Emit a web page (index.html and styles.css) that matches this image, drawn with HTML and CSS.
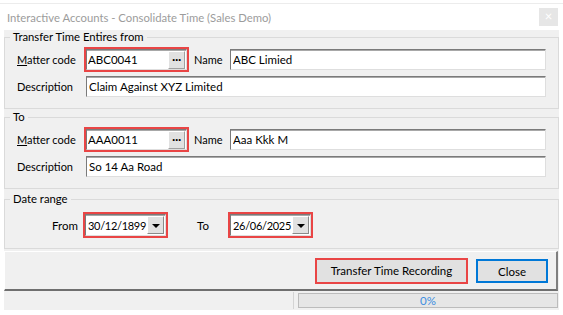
FILE: index.html
```html
<!DOCTYPE html>
<html lang="en">
<head>
  <meta charset="UTF-8">
  <title>Interactive Accounts - Consolidate Time (Sales Demo)</title>
  <link rel="stylesheet" href="styles.css">
</head>
<body>
  <div class="window">
    <div class="titlebar">
      <span class="title">Interactive Accounts - Consolidate Time (Sales Demo)</span>
      <span class="close">&#215;</span>
    </div>

    <div class="client">
      <!-- source matter -->
      <fieldset class="group">
        <legend>Transfer Time Entires from</legend>
        <div class="row row-top">
          <label class="lbl"><u>M</u>atter code</label>
          <div class="hl">
            <div class="lookup">
              <input type="text" value="ABC0041">
              <button class="dots">&middot;&middot;&middot;</button>
            </div>
          </div>
          <label class="lbl-name">Name</label>
          <input class="tb tb-name" type="text" value="ABC Limied">
        </div>
        <div class="row row-desc">
          <label class="lbl">Description</label>
          <input class="tb tb-desc" type="text" value="Claim Against XYZ Limited">
        </div>
      </fieldset>

      <!-- target matter -->
      <fieldset class="group group-to">
        <legend>To</legend>
        <div class="row row-top">
          <label class="lbl"><u>M</u>atter code</label>
          <div class="hl">
            <div class="lookup">
              <input type="text" value="AAA0011">
              <button class="dots">&middot;&middot;&middot;</button>
            </div>
          </div>
          <label class="lbl-name">Name</label>
          <input class="tb tb-name" type="text" value="Aaa Kkk M">
        </div>
        <div class="row row-desc">
          <label class="lbl">Description</label>
          <input class="tb tb-desc" type="text" value="So 14 Aa Road">
        </div>
      </fieldset>

      <!-- dates -->
      <fieldset class="group group-dates">
        <legend>Date range</legend>
        <div class="row row-date">
          <label class="lbl-date">From</label>
          <div class="hl">
            <div class="date">
              <span class="date-val">30/12/1899</span>
              <button class="drop"><span class="arrow"></span></button>
            </div>
          </div>
          <label class="lbl-date lbl-to">To</label>
          <div class="hl">
            <div class="date">
              <span class="date-val">26/06/2025</span>
              <button class="drop"><span class="arrow"></span></button>
            </div>
          </div>
        </div>
      </fieldset>

      <div class="actions">
        <button class="btn btn-transfer">Transfer Time Recording</button>
        <button class="btn btn-close">Close</button>
      </div>

      <div class="status">
        <span class="sep"></span>
        <div class="progress">0%</div>
      </div>
    </div>
  </div>
</body>
</html>
```

FILE: styles.css
```css
body { margin:0; padding-top:3px; background:#fff; color:#000; font-family:Lato, "Liberation Sans", sans-serif; font-size:11.5px; }
.window { width:563px; border-top:1px solid #ececec; }

/* title bar */
.titlebar { height:26px; display:flex; align-items:center; justify-content:space-between; padding:0 5px 0 7px; }
.title { color:#9c9c9c; font-size:11.3px; white-space:nowrap; }
.close { width:19px; height:18px; background:#e6e6e6; color:#fff; font-size:13px; line-height:17px; text-align:center; }

.client { margin:0 4px; height:280px; background:#f0f0f0; display:flex; flex-direction:column; }

/* group boxes */
.group { margin:0; border:1px solid #dadada; padding:3px 12px 11px 12px; min-width:0; }
.group legend { margin-left:-7px; padding:0 3px; line-height:14px; font-size:11.3px; }
.group-to { margin-top:1px; }
.group-dates { margin-top:3px; padding-top:6px; padding-bottom:10px; }

.row { display:flex; align-items:center; white-space:nowrap; }
.row-top { height:25px; }
.row-desc { height:21px; margin-top:4px; }
.row-date { height:26px; }

.lbl { width:67px; flex:none; font-size:11px; }
.lbl-name { width:36px; margin-left:5px; flex:none; font-size:11px; }
.lbl-date { width:31px; margin-left:35px; flex:none; }
.lbl-to { margin-left:29px; }

/* text boxes */
input { font:inherit; color:#000; }
.tb { box-sizing:border-box; height:21px; padding:0 2px; background:#fff; border:1px solid; border-color:#7a7a7a #dedede #dedede #7a7a7a; box-shadow:inset 0 1px 0 #a8a8a8; outline:none; }
.tb-name { width:316px; }
.tb-desc { width:460px; margin-left:2px; }

/* red highlight round a control */
.hl { border:2px solid #e94545; flex:none; }

.lookup { box-sizing:border-box; width:101px; height:21px; display:flex; align-items:center; background:#fff; border:1px solid; border-color:#7a7a7a #dedede #dedede #7a7a7a; box-shadow:inset 0 1px 0 #a8a8a8; }
.lookup input { flex:1; min-width:0; border:none; padding:0 1px; background:transparent; outline:none; height:18px; }
.dots { width:17px; height:18px; margin-right:1px; padding:0; background:#e1e1e1; border:1px solid; border-color:#fff #a0a0a0 #a0a0a0 #fff; font:bold 12px/14px "Liberation Sans", sans-serif; letter-spacing:-1px; color:#000; }

.date { box-sizing:border-box; width:81px; height:22px; display:flex; align-items:center; background:#fff; border:1px solid; border-color:#7a7a7a #dedede #dedede #7a7a7a; box-shadow:inset 0 1px 0 #a8a8a8; }
.date-val { flex:1; padding-left:2px; font-size:11px; letter-spacing:-0.3px; }
.drop { width:17px; height:18px; margin-right:1px; padding:0; background:#e1e1e1; border:1px solid; border-color:#fff #8a8a8a #8a8a8a #fff; display:flex; align-items:center; justify-content:center; }
.arrow { width:0; height:0; border-left:4px solid transparent; border-right:4px solid transparent; border-top:4px solid #000; margin-top:1px; }

/* button panel */
.actions { margin-top:2px; height:40px; box-sizing:border-box; display:flex; align-items:center; justify-content:flex-end; gap:8px; padding-right:8px; border:1px solid; border-color:#fff #7f7f7f #6f6f6f #fff; border-width:1px 2px 2px 1px; margin-right:1px; }
.btn { font:inherit; color:#000; background:#e1e1e1; padding:0; }
.btn-transfer { width:153px; height:26px; border:2px solid #e94545; }
.btn-close { width:72px; height:24px; border:2px solid #0078d7; margin-top:1px; }

/* status bar */
.status { height:19px; display:flex; align-items:center; }
.sep { width:1px; height:17px; margin-left:289px; border-left:1px solid #d4d4d4; }
.progress { box-sizing:border-box; width:260px; height:15px; margin-left:3px; border:1px solid #bcbcbc; background:#e6e6e6; color:#3d8ee0; font-size:11.5px; line-height:13px; text-align:center; }
```
